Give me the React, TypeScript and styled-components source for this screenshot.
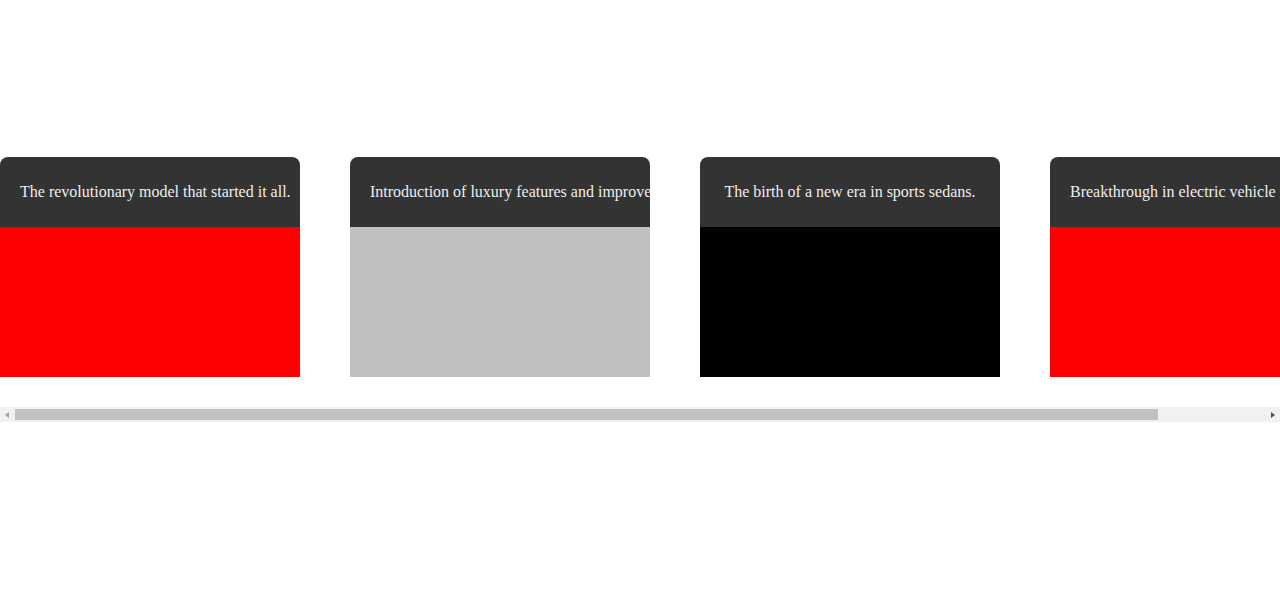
import React, { useEffect, useRef, useState } from "react";
import styled, { createGlobalStyle } from "styled-components";

const GlobalStyle = createGlobalStyle`
  html, body {
    margin: 0;
    padding: 0;
    background: #fff;
    font-family: "Liberation Serif", "Times New Roman", serif;
  }
`;

interface Model {
  id: number;
  caption: string;
  color: string;
}

const models: Model[] = [
  { id: 1, caption: "The revolutionary model that started it all.", color: "#ff0000" },
  {
    id: 2,
    caption: "Introduction of luxury features and improved performance.",
    color: "#c0c0c0",
  },
  { id: 3, caption: "The birth of a new era in sports sedans.", color: "#000000" },
  { id: 4, caption: "Breakthrough in electric vehicle technology.", color: "#ff0000" },
];

const App: React.FC = () => {
  const timelineRef = useRef<HTMLDivElement>(null);
  const [ratio, setRatio] = useState(1280 / 1400);

  useEffect(() => {
    const el = timelineRef.current;
    if (el && el.scrollWidth) setRatio(el.clientWidth / el.scrollWidth);
  }, []);

  return (
    <>
      <GlobalStyle />
      <Page>
        <Timeline ref={timelineRef}>
          {models.map((m) => (
            <Card key={m.id}>
              <Caption>{m.caption}</Caption>
              <Swatch $color={m.color} />
            </Card>
          ))}
        </Timeline>

        <ScrollTrack>
          <ArrowButton>
            <Arrow $dir="left" $disabled />
          </ArrowButton>
          <ThumbArea>
            <Thumb style={{ width: `${ratio * 100}%` }} />
          </ThumbArea>
          <ArrowButton>
            <Arrow $dir="right" />
          </ArrowButton>
        </ScrollTrack>
      </Page>
    </>
  );
};

export default App;

const Page = styled.div`
  padding-top: 157px;
`;

const Timeline = styled.div`
  display: flex;
  overflow: hidden;
`;

const Card = styled.div`
  flex: 0 0 300px;
  width: 300px;
  margin-right: 50px;
  margin-bottom: 30px;
  border-radius: 8px 8px 0 0;
  overflow: hidden;
  background: #333;
`;

const Caption = styled.div`
  height: 70px;
  padding: 0 20px;
  line-height: 70px;
  font-size: 16px;
  color: #eee;
  text-align: center;
  white-space: nowrap;
`;

const Swatch = styled.div<{ $color: string }>`
  height: 150px;
  background: ${(p) => p.$color};
`;

const ScrollTrack = styled.div`
  display: flex;
  height: 15px;
  background: #f1f1f1;
`;

const ArrowButton = styled.div`
  flex: 0 0 15px;
  display: flex;
  align-items: center;
  justify-content: center;
`;

const Arrow = styled.span<{ $dir: "left" | "right"; $disabled?: boolean }>`
  width: 0;
  height: 0;
  border-top: 3.5px solid transparent;
  border-bottom: 3.5px solid transparent;
  ${(p) =>
    p.$dir === "left"
      ? `border-right: 4px solid ${p.$disabled ? "#a3a3a3" : "#505050"}; margin-left: -1px;`
      : `border-left: 4px solid ${p.$disabled ? "#a3a3a3" : "#505050"}; margin-left: 1px;`}
`;

const ThumbArea = styled.div`
  flex: 1;
  display: flex;
  align-items: center;
`;

const Thumb = styled.div`
  height: 11px;
  background: #c1c1c1;
`;
